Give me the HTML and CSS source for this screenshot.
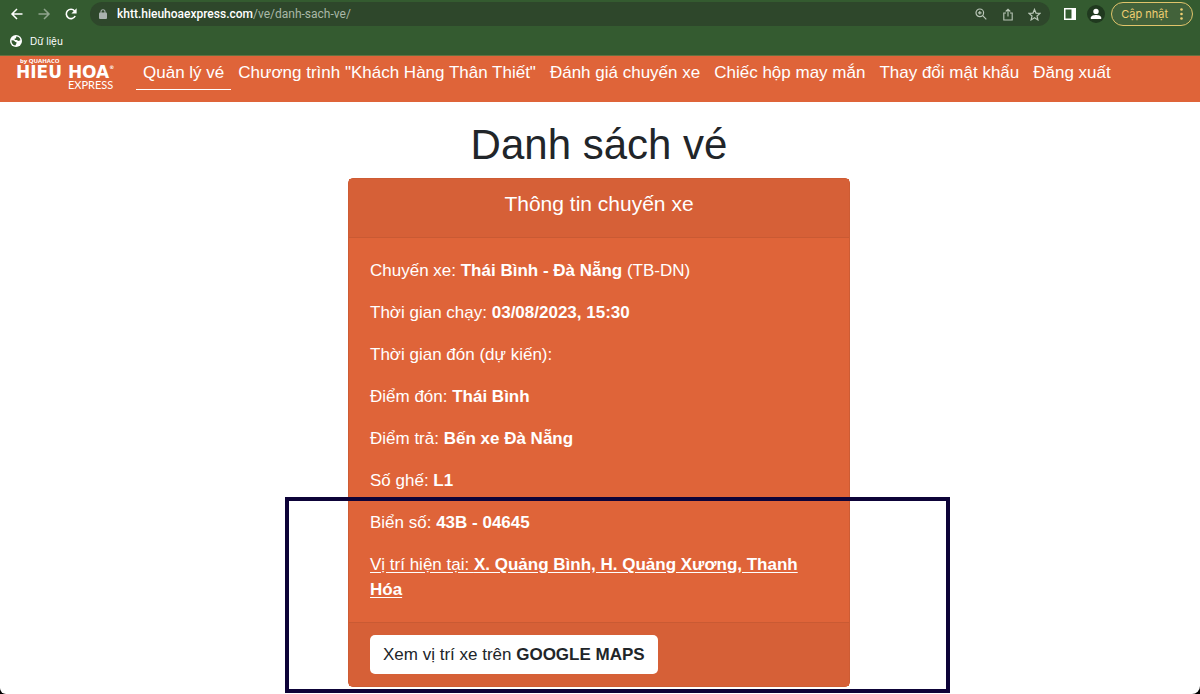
FILE: index.html
```html
<!DOCTYPE html>
<html lang="vi">
<head>
    <meta charset="UTF-8">
    <meta name="viewport" content="width=device-width, initial-scale=1.0">
    <title>Danh sách vé</title>
    <link rel="stylesheet" href="styles.css">
</head>
<body>
    <div class="browser">
        <div class="toolbar">
            <button class="icon-button" aria-label="Back">
                <svg width="14" height="14" viewBox="0 0 14 14" fill="none" stroke="#fff" stroke-width="1.5"><path d="M12.5 7H2M7 2L2 7l5 5"/></svg>
            </button>
            <button class="icon-button dim" aria-label="Forward">
                <svg width="14" height="14" viewBox="0 0 14 14" fill="none" stroke="#fff" stroke-width="1.5"><path d="M1.5 7H12M7 2l5 5-5 5"/></svg>
            </button>
            <button class="icon-button" aria-label="Reload">
                <svg width="14" height="14" viewBox="0 0 14 14"><path d="M11.2 9A4.7 4.7 0 1 1 10.6 3.9" fill="none" stroke="#fff" stroke-width="1.6"/><path d="M12.6 1.2v5.2H7.4z" fill="#fff"/></svg>
            </button>
            <div class="omnibox">
                <svg class="lock" width="8" height="10" viewBox="0 0 8 10"><rect y="3.6" width="8" height="6.4" rx="1" fill="#a9b2ae"/><path d="M2 4V2.7a2 2 0 0 1 4 0V4" fill="none" stroke="#a9b2ae" stroke-width="1.1"/></svg>
                <label class="host" for="address">khtt.hieuhoaexpress.com</label>
                <input class="path" id="address" type="text" value="/ve/danh-sach-ve/">
                <button class="icon-button" aria-label="Zoom">
                    <svg width="12" height="12" viewBox="0 0 12 12" fill="none" stroke="#b9c6b7" stroke-width="1.2"><circle cx="4.8" cy="4.8" r="3.8"/><path d="M7.7 7.7l3.6 3.6M3 4.8h3.6M4.8 3v3.6"/></svg>
                </button>
                <button class="icon-button" aria-label="Share">
                    <svg width="12" height="13" viewBox="0 0 12 13" fill="none" stroke="#b9c6b7" stroke-width="1.1"><path d="M4 5H1.8v7h8.4V5H8M6 8.5V1.2M3.7 3.5L6 1.2l2.3 2.3"/></svg>
                </button>
                <button class="icon-button" aria-label="Bookmark">
                    <svg width="13" height="13" viewBox="0 0 13 13" fill="none" stroke="#b9c6b7" stroke-width="1.2"><path d="M6.5 1.4l1.5 3.7 4 .3-3 2.6.9 3.9-3.4-2.1-3.4 2.1.9-3.9-3-2.6 4-.3z"/></svg>
                </button>
            </div>
            <div class="actions">
                <button class="icon-button" aria-label="Side panel">
                    <svg width="12" height="12" viewBox="0 0 12 12"><path fill="#fff" fill-rule="evenodd" d="M0 0h12v12H0zM1.5 1.5v9H7.5v-9z"/></svg>
                </button>
                <button class="avatar" aria-label="Profile">
                    <svg width="12" height="12" viewBox="0 0 12 12" fill="#fff"><circle cx="6" cy="3.4" r="2.7"/><path d="M.8 11V9.6C.8 7.8 4 7 6 7s5.2.8 5.2 2.6V11z"/></svg>
                </button>
            </div>
            <button class="update">Cập nhật
                <svg width="3" height="12" viewBox="0 0 3 12" fill="#f0cf72"><circle cx="1.5" cy="1.5" r="1.3"/><circle cx="1.5" cy="6" r="1.3"/><circle cx="1.5" cy="10.5" r="1.3"/></svg>
            </button>
        </div>
        <div class="bookmarks">
            <a href="#">
                <svg width="12" height="12" viewBox="0 0 12 12"><circle cx="6" cy="6" r="6" fill="#fff"/><path d="M1.5 5.2l2.3.4 1.6 1.5 1.2.2-.2 1.3-1.1 1.9C2.8 10 1.3 8 1.5 5.2zM6.2 1.6c2.3-.1 3.9 1.3 4.2 3.6l-2.1.9-1.5-1.2-1.9.1-.4-1.2 1.6-.5z" fill="#345b30"/></svg>
                Dữ liệu
            </a>
        </div>
    </div>

    <nav class="navbar">
        <a class="logo" href="#">
            <span class="logo-by">by QUAHACO</span>
            <span class="logo-name">HIEU HOA<sup>®</sup></span>
            <span class="logo-express">EXPRESS</span>
        </a>
        <a class="nav-link active" href="#">Quản lý vé</a>
        <a class="nav-link" href="#">Chương trình "Khách Hàng Thân Thiết"</a>
        <a class="nav-link" href="#">Đánh giá chuyến xe</a>
        <a class="nav-link" href="#">Chiếc hộp may mắn</a>
        <a class="nav-link" href="#">Thay đổi mật khẩu</a>
        <a class="nav-link" href="#">Đăng xuất</a>
    </nav>

    <main>
        <h1>Danh sách vé</h1>
        <div class="card">
            <h2 class="card-header">Thông tin chuyến xe</h2>
            <div class="card-body">
                <p>Chuyến xe: <b>Thái Bình - Đà Nẵng</b> (TB-DN)</p>
                <p>Thời gian chạy: <b>03/08/2023, 15:30</b></p>
                <p>Thời gian đón (dự kiến):</p>
                <p>Điểm đón: <b>Thái Bình</b></p>
                <p>Điểm trả: <b>Bến xe Đà Nẵng</b></p>
                <p>Số ghế: <b>L1</b></p>
                <p>Biển số: <b>43B - 04645</b></p>
                <p><u>Vị trí hiện tại: <b>X. Quảng Bình, H. Quảng Xương, Thanh Hóa</b></u></p>
            </div>
            <div class="card-footer">
                <button class="map-button">Xem vị trí xe trên <b>GOOGLE MAPS</b></button>
            </div>
            <div class="highlight"></div>
        </div>
    </main>
</body>
</html>
```
FILE: styles.css
```css
* {
    box-sizing: border-box;
}
html {
    background-color: #000;
}
body {
    margin: 0;
    min-height: 100vh;
    background-color: #fff;
    border-radius: 0 0 8px 6px;
    color: #212529;
    font-family: "Liberation Sans", Arial, sans-serif;
    font-size: 17px;
    line-height: 25px;
}
a {
    color: inherit;
    text-decoration: none;
}
button {
    border: none;
    background: none;
    padding: 0;
    font: inherit;
    cursor: pointer;
}

/* browser bar */
.browser {
    height: 56px;
    background-color: #345b30;
    border-bottom: 1px solid #66703f;
    color: #fff;
    font-family: Inter, sans-serif;
    font-size: 11px;
    line-height: 16px;
}
.toolbar {
    display: flex;
    align-items: center;
    height: 28px;
    padding: 0 7px 0 9px;
    gap: 12px;
}
.icon-button {
    display: flex;
    justify-content: center;
    width: 15px;
}
.dim {
    opacity: 0.45;
}
.omnibox {
    flex: 1;
    display: flex;
    align-items: center;
    height: 24px;
    padding: 0 8px 0 9px;
    border-radius: 12px;
    background-color: #2e472b;
    font: 12px/16px Roboto, sans-serif;
}
.lock {
    margin-right: 10px;
}
.omnibox .icon-button {
    margin-left: 12px;
}
.host {
    font-weight: 500;
}
.path {
    flex: 1;
    min-width: 0;
    padding: 0;
    border: none;
    outline: none;
    background: none;
    color: #a9b8a7;
    font: inherit;
}
.actions {
    display: flex;
    align-items: center;
    gap: 10px;
    margin-right: -6px;
}
.avatar {
    display: flex;
    justify-content: center;
    align-items: center;
    width: 18px;
    height: 18px;
    border-radius: 50%;
    background-color: #20391f;
}
.update {
    display: flex;
    align-items: center;
    gap: 12px;
    height: 24px;
    padding: 0 9px;
    border: 1px solid #e0c46b;
    border-radius: 12px;
    background-color: #42623a;
    color: #f0cf72;
}
.bookmarks {
    display: flex;
    padding: 5px 10px;
    font-size: 10px;
}
.bookmarks a {
    display: flex;
    align-items: center;
    gap: 8px;
}

/* menu */
.navbar {
    display: flex;
    align-items: flex-start;
    min-height: 46px;
    padding: 0 16px;
    background-color: #df6439;
    color: #fff;
}
.logo {
    display: flex;
    flex-direction: column;
    width: 103px;
    margin-right: 17px;
    white-space: nowrap;
}
.logo-by {
    padding: 1px 0 0 4px;
    font: bold 6px/8px "Open Sans", sans-serif;
}
.logo-name {
    font: bold 17px/14px "DejaVu Sans", sans-serif;
}
.logo-name sup {
    font-size: 5px;
    line-height: 5px;
    vertical-align: top;
}
.logo-express {
    padding-left: 52px;
    font: 11px/12px Lato, sans-serif;
}
.nav-link {
    padding: 4px 7px;
    border-bottom: 1px solid transparent;
}
.active {
    border-color: #fff;
}

/* ticket */
main {
    padding: 18px 12px 7px 10px;
}
h1 {
    margin: 0 0 8px;
    font-size: 42px;
    font-weight: normal;
    line-height: 50px;
    text-align: center;
}
.card {
    position: relative;
    max-width: 502px;
    margin: 0 auto;
    border: 1px solid #cd5c34;
    border-radius: 5px;
    background-color: #df6439;
    color: #fff;
}
.card-header {
    margin: 0;
    padding: 12px 21px 21px;
    border-bottom: 1px solid #c95a33;
    background-color: #d66037;
    font-size: 21px;
    font-weight: normal;
    text-align: center;
}
.card-body {
    padding: 20px 21px 3px;
}
.card-body p {
    margin: 0 0 17px;
}
u {
    text-underline-offset: 2px;
}
.card-footer {
    padding: 12px 21px;
    border-top: 1px solid #c95a33;
    background-color: #d66037;
}
.map-button {
    display: block;
    padding: 7px 13px;
    border-radius: 5px;
    background-color: #fff;
    color: #212529;
}
/* marks the current position of the bus */
.highlight {
    position: absolute;
    left: -64px;
    right: -101px;
    bottom: -7px;
    height: 196px;
    border: 4px solid #0d0338;
    pointer-events: none;
}
```
